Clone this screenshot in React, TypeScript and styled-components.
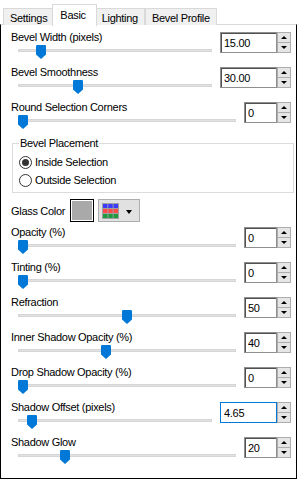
import React from "react";
import styled, { createGlobalStyle } from "styled-components";

const GlobalStyle = createGlobalStyle`
  html, body {
    margin: 0;
    padding: 0;
    background: #fff;
  }
  body {
    font-family: "Liberation Sans", Arial, sans-serif;
    font-size: 11px;
    letter-spacing: -0.3px;
    color: #000;
  }
  * {
    box-sizing: border-box;
  }
`;

const Window = styled.div`
  width: 297px;
  height: 479px;
  display: flex;
  flex-direction: column;
  background: #fff;
`;

const TabStrip = styled.div`
  display: flex;
  align-items: flex-end;
  height: 25px;
  padding-left: 3px;
  position: relative;
  z-index: 1;
`;

const Tab = styled.div<{ $active?: boolean }>`
  height: ${(p) => (p.$active ? "22px" : "17px")};
  padding: ${(p) => (p.$active ? "3px 10px 0 7px" : "2px 6px 0 6px")};
  margin: ${(p) => (p.$active ? "0 -2px -1px" : "0")};
  line-height: 14px;
  white-space: nowrap;
  background: ${(p) => (p.$active ? "#fff" : "#f0f0f0")};
  border: 1px solid #d9d9d9;
  border-bottom: none;
  position: relative;
  z-index: ${(p) => (p.$active ? 2 : 1)};

  & + & {
    border-left: ${(p) => (p.$active ? "1px solid #d9d9d9" : "none")};
  }
`;

const Panel = styled.div`
  flex: 1;
  border: 1px solid #000;
  border-top: 1px solid #d9d9d9;
  margin-top: -1px;
  padding: 5px 5px 0 10px;
  display: flex;
  flex-direction: column;
`;

const Row = styled.div`
  display: grid;
  grid-template-columns: 1fr auto;
  column-gap: 8px;
  height: 35px;
`;

const LeftColumn = styled.div`
  display: flex;
  flex-direction: column;
  min-width: 0;
`;

const Label = styled.div`
  line-height: 14px;
  height: 12px;
  white-space: nowrap;
`;

const Slider = styled.div`
  position: relative;
  margin-left: 7px;
  padding-top: 7px;
  height: 21px;
`;

const Track = styled.div`
  height: 3px;
  background: #e2e2e2;
  border: 1px solid #d6d6d6;
`;

const Thumb = styled.svg`
  position: absolute;
  top: 3px;
  width: 10px;
  height: 14px;
  display: block;
`;

const SpinBox = styled.div`
  display: flex;
  height: 21px;
  margin-top: 2px;
`;

const SpinInput = styled.input<{ $wide?: boolean; $focused?: boolean }>`
  width: ${(p) => (p.$wide ? 57 : 33)}px;
  height: 100%;
  margin: 0;
  padding: 0 0 0 3px;
  font: inherit;
  letter-spacing: inherit;
  color: #000;
  background: #fff;
  border: 1px solid ${(p) => (p.$focused ? "#0078d7" : "#8f8f8f")};
  box-shadow: ${(p) => (p.$focused ? "none" : "inset 1px 1px 0 #505050")};
  outline: none;
`;

const Spinner = styled.div`
  width: 14px;
  display: flex;
  flex-direction: column;
  border: 1px solid #adadad;
  background: #e6e6e6;
`;

const SpinButton = styled.div<{ $down?: boolean }>`
  flex: 1;
  display: flex;
  align-items: center;
  justify-content: center;

  & + & {
    border-top: 1px solid #adadad;
  }

  &::after {
    content: "";
    border-left: 3px solid transparent;
    border-right: 3px solid transparent;
    ${(p) =>
      p.$down ? "border-top: 3px solid #000;" : "border-bottom: 3px solid #000;"}
  }
`;

const Group = styled.fieldset`
  margin: 1px -3px 0 1px;
  padding: 3px 6px 3px 6px;
  border: 1px solid #dcdcdc;
  min-width: 0;
`;

const Legend = styled.legend`
  padding: 0 1px;
  line-height: 14px;
`;

const RadioRow = styled.label`
  display: flex;
  align-items: center;
  gap: 3px;
  height: 18px;
`;

const RadioCircle = styled.span<{ $checked?: boolean }>`
  width: 13px;
  height: 13px;
  border-radius: 50%;
  border: 1px solid #333;
  background: #fff;
  display: flex;
  align-items: center;
  justify-content: center;

  &::after {
    content: "";
    width: 7px;
    height: 7px;
    border-radius: 50%;
    background: ${(p) => (p.$checked ? "#333" : "transparent")};
  }
`;

const ColorRow = styled.div`
  display: flex;
  align-items: center;
  height: 23px;
  margin: 6px 0 3px;
`;

const ColorLabel = styled.div`
  width: 59px;
  white-space: nowrap;
`;

const Swatch = styled.div<{ $color: string }>`
  width: 24px;
  height: 23px;
  border: 1px solid #000;
  padding: 1px;
  background: #fff;

  &::after {
    content: "";
    display: block;
    width: 100%;
    height: 100%;
    background: ${(p) => p.$color};
  }
`;

const PaletteButton = styled.div`
  margin-left: 4px;
  width: 42px;
  height: 23px;
  display: flex;
  align-items: center;
  padding-left: 3px;
  gap: 7px;
  background: #e1e1e1;
  border: 1px solid #adadad;

  &::after {
    content: "";
    border-left: 3.5px solid transparent;
    border-right: 3.5px solid transparent;
    border-top: 4px solid #000;
    margin-top: 2px;
  }
`;

type Field = {
  label: string;
  value: string;
  num: number;
  max: number;
  wide?: boolean;
  focused?: boolean;
};

const topFields: Field[] = [
  { label: "Bevel Width (pixels)", value: "15.00", num: 15, max: 150, wide: true },
  { label: "Bevel Smoothness", value: "30.00", num: 30, max: 100, wide: true },
  { label: "Round Selection Corners", value: "0", num: 0, max: 100 },
];

const bottomFields: Field[] = [
  { label: "Opacity (%)", value: "0", num: 0, max: 100 },
  { label: "Tinting (%)", value: "0", num: 0, max: 100 },
  { label: "Refraction", value: "50", num: 50, max: 100 },
  { label: "Inner Shadow Opacity (%)", value: "40", num: 40, max: 100 },
  { label: "Drop Shadow Opacity (%)", value: "0", num: 0, max: 100 },
  { label: "Shadow Offset (pixels)", value: "4.65", num: 4.65, max: 100, wide: true, focused: true },
  { label: "Shadow Glow", value: "20", num: 20, max: 100 },
];

const tabs = ["Settings", "Basic", "Lighting", "Bevel Profile"];

const SliderField = ({ field }: { field: Field }) => {
  const frac = field.num / field.max;
  return (
    <Row>
      <LeftColumn>
        <Label>{field.label}</Label>
        <Slider>
          <Track />
          <Thumb viewBox="0 0 10 14" style={{ left: `calc((100% - 10px) * ${frac})` }}>
            <path d="M0 1.2 Q0 0 1.2 0 H8.8 Q10 0 10 1.2 V9.5 L5 14 L0 9.5 Z" fill="#0078d7" />
          </Thumb>
        </Slider>
      </LeftColumn>
      <SpinBox>
        <SpinInput readOnly value={field.value} $wide={field.wide} $focused={field.focused} />
        <Spinner>
          <SpinButton />
          <SpinButton $down />
        </Spinner>
      </SpinBox>
    </Row>
  );
};

const PaletteIcon = () => {
  const colors = ["#3b3bff", "#ff4a4a", "#1f9a3f"];
  return (
    <svg width="17" height="16" viewBox="0 0 17 16">
      <rect x="0" y="0" width="17" height="16" fill="#a0a0a0" />
      {colors.map((c, r) =>
        [0, 1, 2].map((col) => (
          <rect key={`${r}-${col}`} x={1 + col * 5.3} y={1 + r * 5} width="4.4" height="4" fill={c} />
        ))
      )}
    </svg>
  );
};

export default function App() {
  return (
    <Window>
      <GlobalStyle />
      <TabStrip>
        {tabs.map((t) => (
          <Tab key={t} $active={t === "Basic"}>
            {t}
          </Tab>
        ))}
      </TabStrip>
      <Panel>
        {topFields.map((f) => (
          <SliderField key={f.label} field={f} />
        ))}
        <Group>
          <Legend>Bevel Placement</Legend>
          <RadioRow>
            <RadioCircle $checked />
            Inside Selection
          </RadioRow>
          <RadioRow>
            <RadioCircle />
            Outside Selection
          </RadioRow>
        </Group>
        <ColorRow>
          <ColorLabel>Glass Color</ColorLabel>
          <Swatch $color="#a9a9a9" />
          <PaletteButton>
            <PaletteIcon />
          </PaletteButton>
        </ColorRow>
        {bottomFields.map((f) => (
          <SliderField key={f.label} field={f} />
        ))}
      </Panel>
    </Window>
  );
}
